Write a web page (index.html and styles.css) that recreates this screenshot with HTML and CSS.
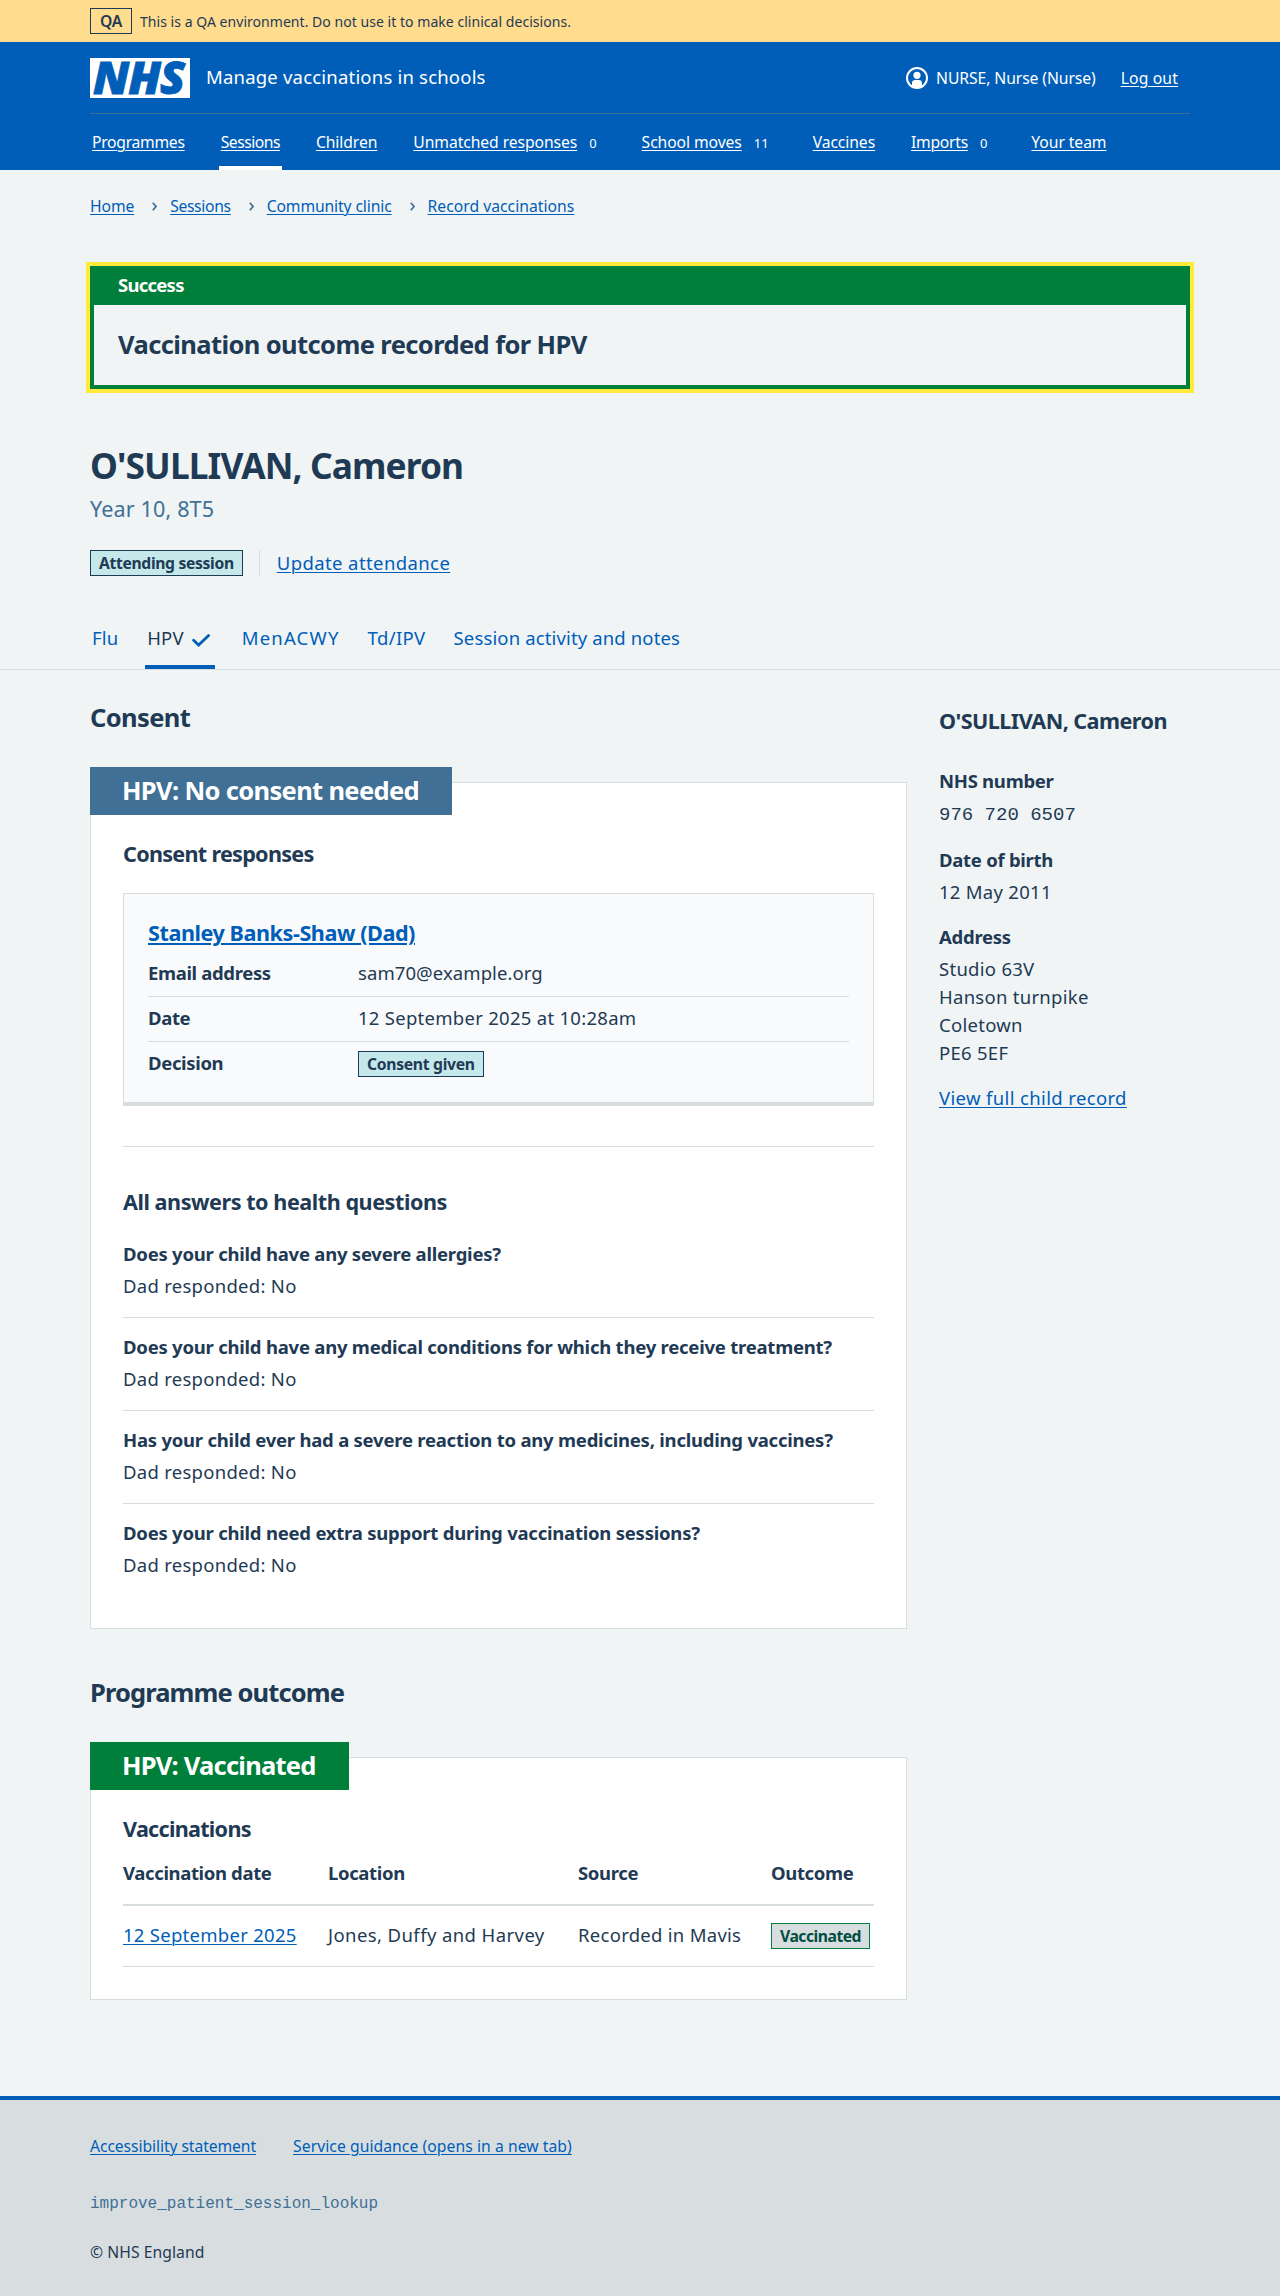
FILE: index.html
```html
<!DOCTYPE html>
<html lang="en">
<head>
<meta charset="utf-8">
<title>Manage vaccinations in schools</title>
<link rel="stylesheet" href="styles.css">
</head>
<body>
<div class="env">
  <div class="container env-inner">
    <strong class="env-tag">QA</strong>
    <span class="env-text">This is a QA environment. Do not use it to make clinical decisions.</span>
  </div>
</div>

<header class="header">
  <div class="container header-top">
    <svg class="logo" viewBox="0 0 100 40" role="img" aria-label="NHS">
      <rect width="100" height="40" fill="#fff"/>
      <text class="logo-text" x="3" y="36" textLength="91" lengthAdjust="spacingAndGlyphs">NHS</text>
    </svg>
    <span class="service">Manage vaccinations in schools</span>
    <div class="account">
      <svg class="user-icon" viewBox="0 0 22 22" aria-hidden="true">
        <circle cx="11" cy="11" r="10" fill="none" stroke="#fff" stroke-width="2"/>
        <circle cx="11" cy="8.3" r="3.6" fill="#fff"/>
        <path d="M6 18.8V16.2Q6 13 9.2 13h3.6Q16 13 16 16.2v2.6Q11 22.5 6 18.8z" fill="#fff"/>
      </svg>
      <span class="user-name">NURSE, Nurse (Nurse)</span>
      <a class="logout" href="#">Log out</a>
    </div>
  </div>
  <nav class="container nav">
    <div class="nav-item"><a class="w1" href="#">Programmes</a></div>
    <div class="nav-item current"><a class="w2" href="#">Sessions</a></div>
    <div class="nav-item"><a href="#">Children</a></div>
    <div class="nav-item"><a href="#">Unmatched responses</a><span class="count">0</span></div>
    <div class="nav-item"><a href="#">School moves</a><span class="count">11</span></div>
    <div class="nav-item"><a href="#">Vaccines</a></div>
    <div class="nav-item"><a class="w1" href="#">Imports</a><span class="count">0</span></div>
    <div class="nav-item"><a href="#">Your team</a></div>
  </nav>
</header>

<main>
  <div class="container">
    <nav class="crumbs">
      <a href="#">Home</a>
      <svg viewBox="0 0 5 9"><path d="M.8.8 4 4.5.8 8.2"/></svg>
      <a class="narrow" href="#">Sessions</a>
      <svg viewBox="0 0 5 9"><path d="M.8.8 4 4.5.8 8.2"/></svg>
      <a href="#">Community clinic</a>
      <svg viewBox="0 0 5 9"><path d="M.8.8 4 4.5.8 8.2"/></svg>
      <a class="wide" href="#">Record vaccinations</a>
    </nav>

    <section class="banner">
      <h2 class="banner-title">Success</h2>
      <p class="banner-text">Vaccination outcome recorded for HPV</p>
    </section>

    <h1 class="title">O'SULLIVAN, Cameron</h1>
    <p class="caption">Year 10, 8T5</p>
    <div class="status">
      <strong class="tag">Attending session</strong>
      <span class="divider"></span>
      <a class="status-link" href="#">Update attendance</a>
    </div>
  </div>

  <nav class="tabs">
    <div class="container tabs-inner">
      <a class="tab" href="#">Flu</a>
      <a class="tab selected" href="#">HPV
        <svg class="tick" viewBox="0 0 18 13"><path d="M1.6 6.2 6.6 11 16.6 1.6"/></svg>
      </a>
      <a class="tab men" href="#">MenACWY</a>
      <a class="tab td" href="#">Td/IPV</a>
      <a class="tab notes" href="#">Session activity and notes</a>
    </div>
  </nav>

  <div class="container columns">
    <div class="primary">
      <h2 class="section-title">Consent</h2>
      <section class="card">
        <h3 class="card-tag">HPV: No consent needed</h3>
        <h4 class="sub-title tight">Consent responses</h4>
        <div class="response">
          <h5 class="response-name"><a href="#">Stanley Banks-Shaw (Dad)</a></h5>
          <dl class="summary">
            <div class="summary-row"><dt>Email address</dt><dd class="email">sam70@example.org</dd></div>
            <div class="summary-row"><dt>Date</dt><dd>12 September 2025 at 10:28am</dd></div>
            <div class="summary-row"><dt>Decision</dt><dd><strong class="tag">Consent given</strong></dd></div>
          </dl>
        </div>
        <hr class="rule">
        <h4 class="sub-title">All answers to health questions</h4>
        <dl class="questions">
          <div class="question"><dt>Does your child have any severe allergies?</dt><dd>Dad responded: No</dd></div>
          <div class="question"><dt>Does your child have any medical conditions for which they receive treatment?</dt><dd>Dad responded: No</dd></div>
          <div class="question"><dt>Has your child ever had a severe reaction to any medicines, including vaccines?</dt><dd>Dad responded: No</dd></div>
          <div class="question"><dt>Does your child need extra support during vaccination sessions?</dt><dd>Dad responded: No</dd></div>
        </dl>
      </section>

      <h2 class="section-title outcome">Programme outcome</h2>
      <section class="card">
        <h3 class="card-tag green">HPV: Vaccinated</h3>
        <h4 class="sub-title tight">Vaccinations</h4>
        <table class="table">
          <colgroup><col class="c1"><col class="c2"><col class="c3"><col></colgroup>
          <thead><tr><th>Vaccination date</th><th>Location</th><th>Source</th><th>Outcome</th></tr></thead>
          <tbody><tr><td><a href="#">12 September 2025</a></td><td class="loose">Jones, Duffy and Harvey</td><td>Recorded in Mavis</td><td><strong class="tag done">Vaccinated</strong></td></tr></tbody>
        </table>
      </section>
    </div>

    <aside class="side">
      <h2 class="side-title">O'SULLIVAN, Cameron</h2>
      <dl class="facts">
        <div><dt>NHS number</dt><dd class="mono">976 720 6507</dd></div>
        <div><dt>Date of birth</dt><dd>12 May 2011</dd></div>
        <div><dt>Address</dt><dd>Studio 63V<br>Hanson turnpike<br>Coletown<br>PE6 5EF</dd></div>
      </dl>
      <a href="#">View full child record</a>
    </aside>
  </div>
</main>

<footer class="footer">
  <div class="container">
    <div class="footer-links">
      <a class="access" href="#">Accessibility statement</a>
      <a href="#">Service guidance (opens in a new tab)</a>
    </div>
    <p class="branch">improve_patient_session_lookup</p>
    <p class="copyright">© NHS England</p>
  </div>
</footer>
</body>
</html>
```
FILE: styles.css
```css
:root {
  --text: #1f3a54;
  --blue: #005eb8;
  --steel: #407096;
  --green: #007f3b;
  --line: #d8dde0;
}
* { box-sizing: border-box; }
body {
  margin: 0;
  background: #f0f4f5;
  color: var(--text);
  font: 400 18.5px/28px "Noto Sans", "Open Sans", sans-serif;
  letter-spacing: .28px;
}
h1, h2, h3, h4, h5, p, dl, dd { margin: 0; }
h1, h2, h3, h4, h5, dt, th { font-weight: 700; }
dt, th { letter-spacing: -.23px; }
a { color: var(--blue); text-underline-offset: 2px; text-decoration-thickness: 1px; }
.container { width: 1100px; margin: 0 auto; }

.env { background: #ffdc8e; padding: 8px 0; font-size: 14px; letter-spacing: .04px; }
.env-inner { display: flex; align-items: center; gap: 8px; line-height: 26px; }
.env-tag { height: 26px; width: 42px; border: 1px solid var(--text); text-align: center; font-size: 15.7px; line-height: 25px; font-weight: 600; letter-spacing: -.3px; }
.env-text { padding-top: 1px; line-height: 25px; }

.header { background: var(--blue); color: #fff; }
.header a { color: #fff; }
.header-top { display: flex; align-items: center; height: 72px; border-bottom: 1px solid var(--steel); }
.logo { width: 100px; height: 40px; flex: none; overflow: visible; }
.logo-text { font: italic 800 45px "Open Sans", "Noto Sans", sans-serif; letter-spacing: -1px; fill: var(--blue); stroke: var(--blue); stroke-width: .9px; }
.service { margin-left: 16px; padding-bottom: 2px; letter-spacing: .2px; }
.account { display: flex; align-items: center; margin-left: auto; margin-right: 12px; font-size: 15.7px; letter-spacing: -.08px; }
.user-icon { width: 22px; height: 22px; margin-right: 8px; }
.user-name { margin-right: 25px; }
.logout { letter-spacing: .15px; }
.nav { display: flex; gap: 32px; height: 56px; font-size: 15.7px; letter-spacing: -.08px; }
.nav-item { display: flex; align-items: center; height: 56px; padding: 0 2px; }
.nav-item .w1 { letter-spacing: -.28px; }
.nav-item .w2 { letter-spacing: -.5px; }
.current { box-shadow: inset 0 -4px #fff; }
.count { font-size: 13px; padding: 1px 8px 0; margin-left: 4px; letter-spacing: 0; }
.count + * { margin-left: 0; }
.nav-item:nth-child(4) { margin-right: 1px; }

.crumbs { display: flex; align-items: center; height: 24px; margin-top: 24px; font-size: 15.7px; letter-spacing: -.12px; line-height: 24px; }
.crumbs svg { width: 5px; height: 9px; margin: 0 13px 0 18px; }
.crumbs .narrow { letter-spacing: -.34px; }
.crumbs .wide { letter-spacing: .02px; }
.crumbs path { fill: none; stroke: var(--steel); stroke-width: 1.7; }

.banner { margin-top: 48px; height: 123px; border: 4px solid var(--green); box-shadow: 0 0 0 4px #ffeb3b; }
.banner-title { height: 35px; padding-left: 24px; background: var(--green); color: #fff; font-size: 18.5px; line-height: 30px; letter-spacing: -.75px; }
.banner-text { padding-left: 24px; font-size: 25.5px; font-weight: 700; line-height: 78px; letter-spacing: -.6px; }

.title { margin-top: 56px; font-size: 35.3px; line-height: 40px; letter-spacing: -.88px; }
.caption { margin-top: 8px; color: var(--steel); font-size: 21.6px; line-height: 32px; letter-spacing: .12px; }
.status { display: flex; align-items: center; margin-top: 25px; height: 26px; }
.divider { width: 1px; height: 26px; margin: 0 17px 0 16px; background: var(--line); }
.status-link { padding-bottom: 1px; letter-spacing: .4px; }
.tag { display: inline-block; height: 26px; padding: 0 8px; border: 1px solid var(--text); background: #c5e8eb; font-size: 15.7px; font-weight: 700; line-height: 24px; letter-spacing: -.34px; white-space: nowrap; }
.done { border-color: var(--green); background: #d8dde0; color: #004f40; letter-spacing: -.48px; }

.tabs { margin-top: 30px; border-bottom: 1px solid var(--line); }
.tabs-inner { display: flex; gap: 25px; }
.tab { display: flex; align-items: center; height: 63px; padding: 0 2px; text-decoration: none; letter-spacing: .15px; }
.selected { color: var(--text); box-shadow: inset 0 -4px var(--blue); padding-right: 5px; }
.men { padding-right: 1px; letter-spacing: 1.2px; }
.td { padding-right: 1px; letter-spacing: .35px; }
.notes { letter-spacing: .14px; }
.tick { width: 18px; height: 13px; margin: 5px 0 0 8px; }
.tick path { fill: none; stroke: var(--blue); stroke-width: 2.8; stroke-linecap: round; }

.columns { display: grid; grid-template-columns: 817px 251px; gap: 32px; }
.section-title { margin-top: 31px; font-size: 25.5px; line-height: 32px; letter-spacing: -.62px; }
.outcome { margin-top: 47px; letter-spacing: -.9px; }
.card { margin-top: 49px; padding: 0 32px 32px; border: 1px solid var(--line); background: #fff; }
.card-tag { width: fit-content; height: 48px; margin: -16px 0 0 -33px; padding: 0 33px 0 32px; background: var(--steel); color: #fff; font-size: 25.5px; line-height: 46px; letter-spacing: -.66px; }
.green { background: var(--green); letter-spacing: -.78px; }
.sub-title { font-size: 21.6px; line-height: 28px; letter-spacing: -.46px; }
.tight { margin-top: 25px; letter-spacing: -.72px; }
.response { margin-top: 25px; padding: 25px 24px 24px; border: 1px solid var(--line); border-bottom-width: 4px; background: #f9fafb; }
.response-name { font-size: 21.6px; line-height: 28px; letter-spacing: -.44px; }
.response-name a { text-decoration-thickness: 2px; }
.summary { margin-top: 5px; }
.summary-row { display: grid; grid-template-columns: 210px 1fr; height: 45px; padding-top: 7px; border-bottom: 1px solid var(--line); }
.summary-row dt { letter-spacing: -.35px; }
.summary-row:last-child { height: 36px; border: 0; }
.summary-row .tag { vertical-align: top; margin-top: 2px; letter-spacing: -.29px; }
.email { letter-spacing: .08px; }
.rule { height: 1px; margin: 40px 0 41px; border: 0; background: var(--line); }
.questions { margin-top: 9px; }
.question { padding: 15px 0 17px; border-bottom: 1px solid var(--line); }
.question:last-child { border: 0; }
.question dd { margin-top: 4px; }

.table { width: 751px; table-layout: fixed; border-collapse: separate; border-spacing: 0; }
.c1 { width: 205px; } .c2 { width: 250px; } .c3 { width: 193px; }
.table th { height: 63px; padding: 16px 0 17px; border-bottom: 2px solid var(--line); text-align: left; letter-spacing: -.36px; }
.table td { height: 61px; padding: 15px 0 17px; border-bottom: 1px solid var(--line); vertical-align: top; }
.table .loose { letter-spacing: .41px; }
.table .tag { vertical-align: top; margin-top: 2px; }

.side-title { margin-top: 37px; font-size: 21.6px; line-height: 28px; letter-spacing: -.56px; }
.facts { margin: 32px 0 17px; }
.facts > div { margin-bottom: 17px; }
.facts dt { letter-spacing: -.27px; }
.facts dd { margin-top: 4px; }
.facts .mono { margin: 6px 0 0; font-family: "Liberation Mono", monospace; font-size: 19px; letter-spacing: 0; }
.side > a { letter-spacing: .36px; }

.footer { height: 200px; margin-top: 96px; padding-top: 34px; border-top: 4px solid var(--blue); background: #d8dde0; font-size: 15.7px; line-height: 24px; letter-spacing: .06px; }
.footer-links { display: flex; gap: 37px; }
.access { letter-spacing: -.08px; }
.branch { margin-top: 34px; color: var(--steel); font: 16px/24px "Liberation Mono", monospace; letter-spacing: 0; }
.copyright { margin-top: 24px; }
```
